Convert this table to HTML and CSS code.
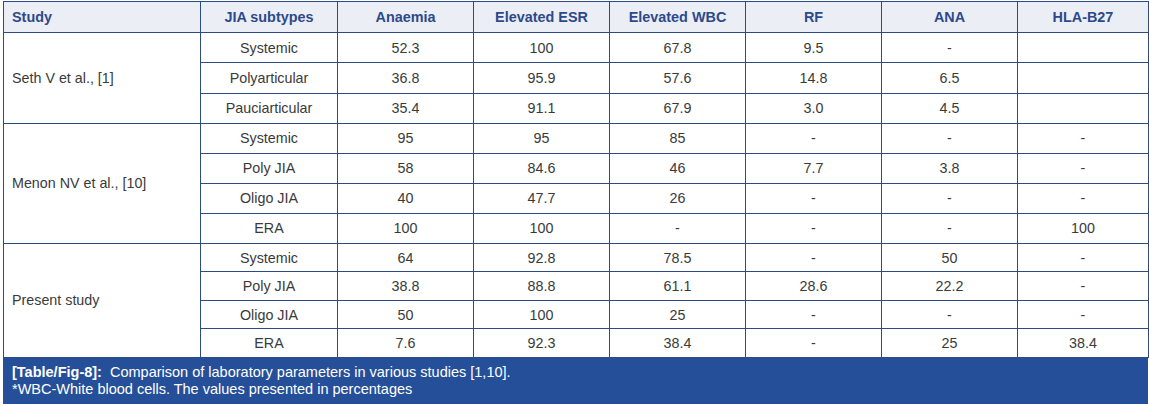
FILE: index.html
```html
<!DOCTYPE html>
<html>
<head>
<meta charset="utf-8">
<link rel="stylesheet" href="styles.css">
</head>
<body>
<div class="wrap">
<table class="data">
<colgroup>
<col class="c-study"><col class="c-sub"><col class="c-n"><col class="c-n"><col class="c-n"><col class="c-n"><col class="c-n"><col class="c-last">
</colgroup>
<thead>
<tr><th class="left">Study</th><th>JIA subtypes</th><th>Anaemia</th><th>Elevated ESR</th><th>Elevated WBC</th><th>RF</th><th>ANA</th><th>HLA-B27</th></tr>
</thead>
<tbody class="g1">
<tr><td class="left" rowspan="3">Seth V et al., [1]</td><td>Systemic</td><td>52.3</td><td>100</td><td>67.8</td><td>9.5</td><td>-</td><td></td></tr>
<tr><td>Polyarticular</td><td>36.8</td><td>95.9</td><td>57.6</td><td>14.8</td><td>6.5</td><td></td></tr>
<tr><td>Pauciarticular</td><td>35.4</td><td>91.1</td><td>67.9</td><td>3.0</td><td>4.5</td><td></td></tr>
</tbody>
<tbody class="g2">
<tr><td class="left" rowspan="4">Menon NV et al., [10]</td><td>Systemic</td><td>95</td><td>95</td><td>85</td><td>-</td><td>-</td><td>-</td></tr>
<tr><td>Poly JIA</td><td>58</td><td>84.6</td><td>46</td><td>7.7</td><td>3.8</td><td>-</td></tr>
<tr><td>Oligo JIA</td><td>40</td><td>47.7</td><td>26</td><td>-</td><td>-</td><td>-</td></tr>
<tr><td>ERA</td><td>100</td><td>100</td><td>-</td><td>-</td><td>-</td><td>100</td></tr>
</tbody>
<tbody class="g3">
<tr><td class="left" rowspan="4">Present study</td><td>Systemic</td><td>64</td><td>92.8</td><td>78.5</td><td>-</td><td>50</td><td>-</td></tr>
<tr><td>Poly JIA</td><td>38.8</td><td>88.8</td><td>61.1</td><td>28.6</td><td>22.2</td><td>-</td></tr>
<tr><td>Oligo JIA</td><td>50</td><td>100</td><td>25</td><td>-</td><td>-</td><td>-</td></tr>
<tr><td>ERA</td><td>7.6</td><td>92.3</td><td>38.4</td><td>-</td><td>25</td><td>38.4</td></tr>
</tbody>
</table>
<div class="caption">
<div><b>[Table/Fig-8]:</b>&nbsp; Comparison of laboratory parameters in various studies [1,10].</div>
<div>*WBC-White blood cells. The values presented in percentages</div>
</div>
</div>
</body>
</html>
```
FILE: styles.css
```css
html, body {
  margin: 0;
  padding: 0;
  background: #ffffff;
}
.wrap {
  padding: 1px 0 0 3px;
  width: 1145px;
  font-family: "Liberation Sans", Arial, sans-serif;
}
.data {
  border-collapse: collapse;
  table-layout: fixed;
  width: 1145px;
  font-size: 14.3px;
  color: #3a3a3a;
}
.c-study { width: 197px; }
.c-sub { width: 137px; }
.c-n { width: 136px; }
.c-last { width: 131px; }
.data th, .data td {
  border: 1px solid #2c4a84;
  text-align: center;
  padding: 0 8px;
  white-space: nowrap;
}
.data th {
  background: #eceef6;
  color: #2c4a8a;
  font-weight: bold;
  font-size: 14.4px;
  height: 30px;
}
.data .g1 td {
  height: 29.3px;
}
.data .g2 td {
  height: 29px;
}
.data .g3 td {
  height: 27.5px;
}
.data .left {
  text-align: left;
}
.caption {
  background: #264f99;
  color: #ffffff;
  font-size: 14.5px;
  line-height: 17px;
  padding: 6px 9px 6px;
  width: 1127px;
}
.caption b {
  font-weight: bold;
}
```
